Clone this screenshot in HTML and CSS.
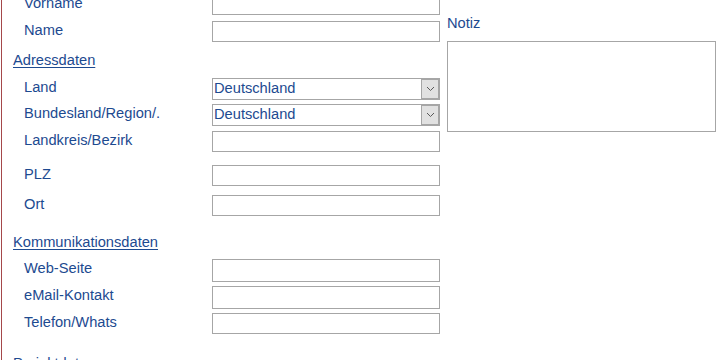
FILE: index.html
```html
<!DOCTYPE html>
<html lang="de">
<head>
<meta charset="utf-8">
<title>Kontakt</title>
<link rel="stylesheet" href="styles.css">
</head>
<body>
<div class="page">
  <div class="form">
    <div class="row"><span class="lbl">Vorname</span><input class="field" type="text"></div>
    <div class="row row-gap-name"><span class="lbl">Name</span><input class="field" type="text"></div>

    <div class="section sec-addr">Adressdaten</div>
    <div class="row row-gap-4"><span class="lbl">Land</span>
      <div class="select"><span class="sel-text">Deutschland</span><span class="sel-btn"><svg width="9" height="6" viewBox="0 0 9 6"><polyline points="1,1 4.5,4.5 8,1" fill="none" stroke="#5a5a5a" stroke-width="1"/></svg></span></div>
    </div>
    <div class="row row-gap-5"><span class="lbl">Bundesland/Region/.</span>
      <div class="select"><span class="sel-text">Deutschland</span><span class="sel-btn"><svg width="9" height="6" viewBox="0 0 9 6"><polyline points="1,1 4.5,4.5 8,1" fill="none" stroke="#5a5a5a" stroke-width="1"/></svg></span></div>
    </div>
    <div class="row row-gap-13"><span class="lbl">Landkreis/Bezirk</span><input class="field" type="text"></div>
    <div class="row row-gap-9"><span class="lbl">PLZ</span><input class="field" type="text"></div>
    <div class="row row-last"><span class="lbl">Ort</span><input class="field" type="text"></div>

    <div class="section sec-komm">Kommunikationsdaten</div>
    <div class="row row-gap-4"><span class="lbl">Web-Seite</span><input class="field field-tall" type="text"></div>
    <div class="row row-gap-4"><span class="lbl">eMail-Kontakt</span><input class="field field-tall" type="text"></div>
    <div class="row row-last"><span class="lbl">Telefon/Whats</span><input class="field" type="text"></div>

    <div class="section sec-proj">Projektdaten</div>
  </div>

  <div class="notes">
    <div class="notes-label">Notiz</div>
    <textarea class="notes-area"></textarea>
  </div>
</div>
</body>
</html>
```

FILE: styles.css
```css
html, body {
  margin: 0;
  padding: 0;
  background: #ffffff;
  overflow: hidden;
}

body {
  font-family: "Liberation Sans", Arial, sans-serif;
  font-size: 11pt;
  color: #1d4a90;
}

.page {
  margin-left: 1px;
  border-left: 1px solid #a4474a;
  height: 360px;
  display: grid;
  grid-template-columns: 438px 269px;
  column-gap: 7px;
  align-items: start;
}

.form {
  margin-top: -6px;
  display: flex;
  flex-direction: column;
}

.row {
  display: flex;
  align-items: flex-start;
  margin-bottom: 6px;
}

.row-gap-name { margin-bottom: 0; }
.row-gap-4 { margin-bottom: 4px; }
.row-gap-5 { margin-bottom: 5px; }
.row-gap-9 { margin-bottom: 9px; }
.row-gap-13 { margin-bottom: 13px; }
.row-last { margin-bottom: 0; }

.lbl {
  width: 188px;
  padding-left: 22px;
  padding-top: 1px;
  line-height: 17px;
  white-space: nowrap;
}

.field {
  box-sizing: border-box;
  width: 228px;
  height: 21px;
  margin: 0;
  padding: 0 2px;
  border: 1px solid #a6a6a6;
  border-radius: 0;
  background: #ffffff;
  font: inherit;
  color: inherit;
  outline: none;
}

.field-tall { height: 23px; }

.select {
  box-sizing: border-box;
  width: 228px;
  height: 22px;
  border: 1px solid #a6a6a6;
  background: #ffffff;
  display: flex;
  align-items: stretch;
}

.sel-text {
  flex: 1;
  padding-left: 1px;
  line-height: 19px;
  white-space: nowrap;
}

.sel-btn {
  box-sizing: border-box;
  width: 18px;
  border: 1px solid #a6a6a6;
  background: #e1e1e1;
  display: flex;
  align-items: center;
  justify-content: center;
}

.section {
  padding-left: 11px;
  line-height: 17px;
  text-decoration: underline;
  text-underline-offset: 2px;
  white-space: nowrap;
}

.sec-addr { margin-top: 10px; margin-bottom: 9px; }
.sec-komm { margin-top: 18px; margin-bottom: 8px; }
.sec-proj { margin-top: 21px; }

.notes {
  display: flex;
  flex-direction: column;
  padding-top: 15px;
}

.notes-label {
  line-height: 17px;
  margin-bottom: 9px;
}

.notes-area {
  box-sizing: border-box;
  width: 269px;
  height: 91px;
  margin: 0;
  padding: 2px;
  border: 1px solid #a6a6a6;
  border-radius: 0;
  resize: none;
  font: inherit;
  outline: none;
}
```
